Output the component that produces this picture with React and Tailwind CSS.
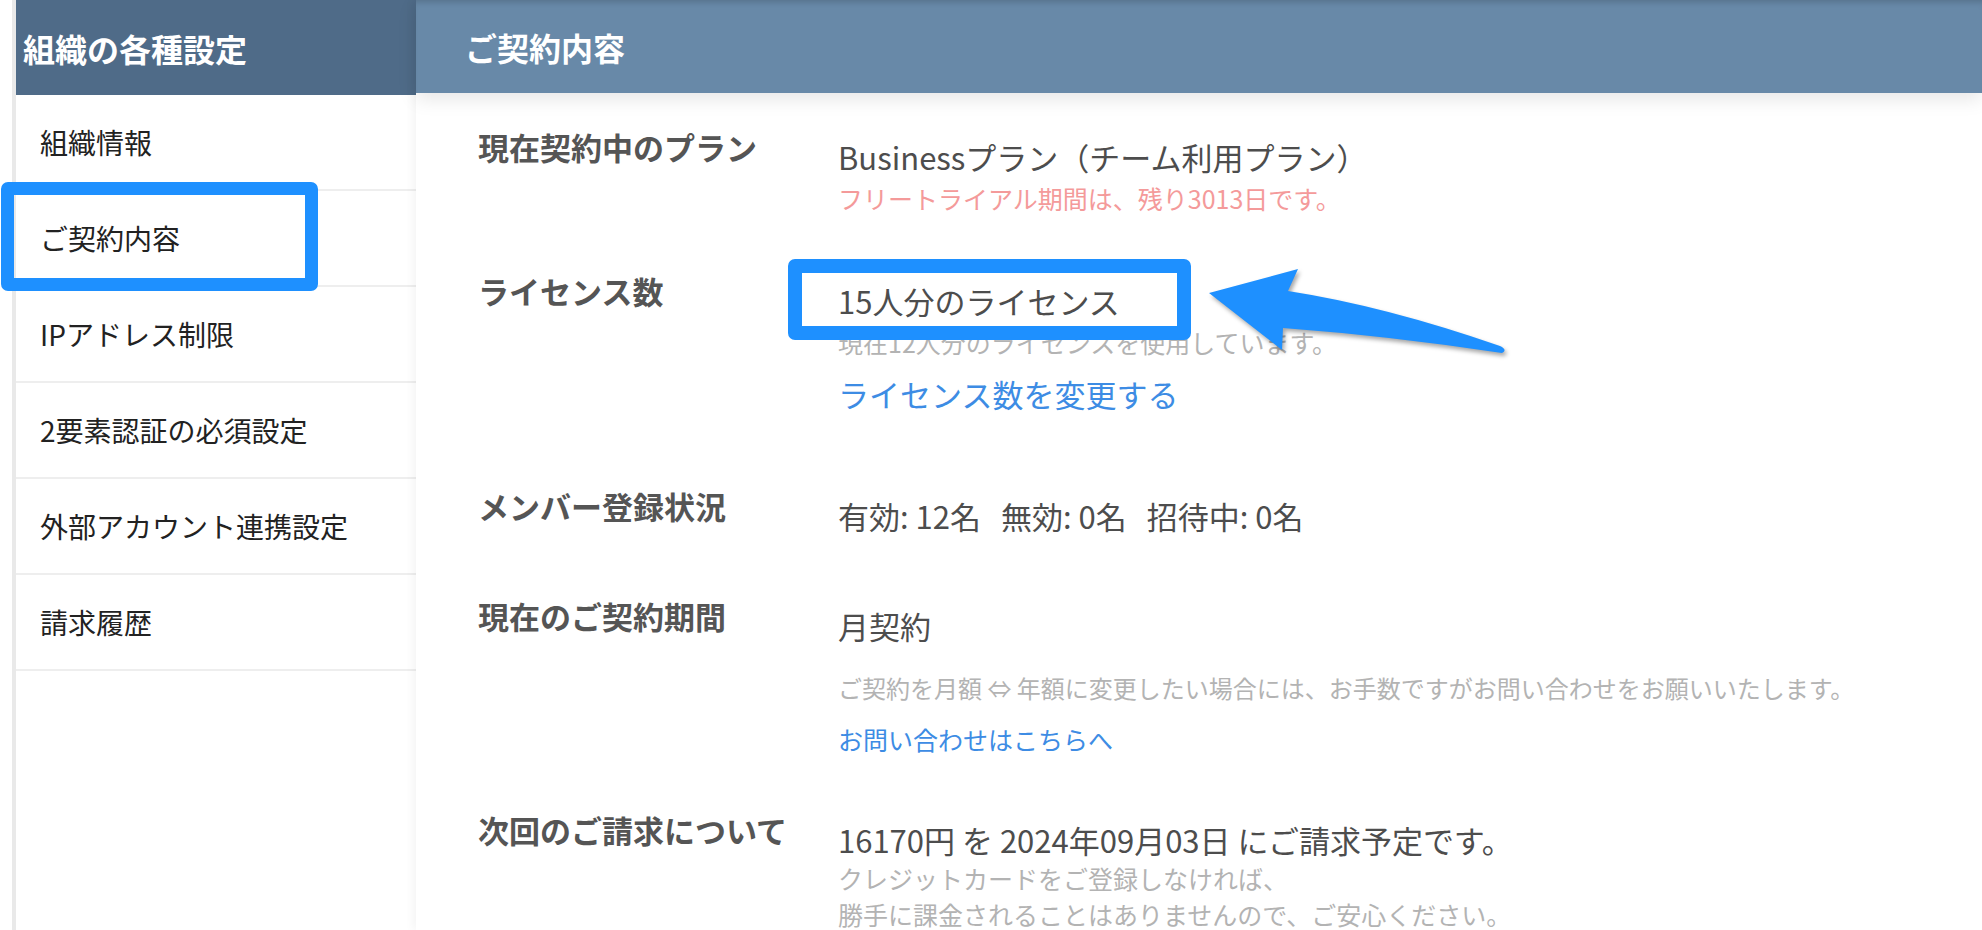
import React from 'react'

const menu = ['組織情報', 'ご契約内容', 'IPアドレス制限', '2要素認証の必須設定', '外部アカウント連携設定', '請求履歴']

const Row = ({ label, className, children }) => {
  return (
    <div className={'flex ' + className}>
      <div className='-mt-[5px] w-[360px] shrink-0 text-[31px] font-bold leading-[30px] text-[#555]'>{label}</div>
      <div className='flex flex-col'>{children}</div>
    </div>
  )
}

const App = () => {
  return (
    <div className="relative flex h-[930px] w-full overflow-hidden bg-white font-['Noto_Sans_CJK_JP','Noto_Sans',sans-serif]">
      {/* sidebar */}
      <div className='w-[416px] shrink-0 pl-3'>
        <div className='h-full border-l-4 border-[#e9e9e9]'>
          <div className='flex h-[95px] items-center bg-[#4f6b88] pl-[7px] text-[32px] font-bold text-white'>
            組織の各種設定
          </div>
          {menu.map((m) => (
            <div key={m} className='flex h-[96px] items-center border-b-2 border-[#eeeeee] pl-6 text-[28px] text-[#222]'>
              {m}
            </div>
          ))}
        </div>
      </div>

      {/* main */}
      <div className='flex-1 shadow-[-4px_0_8px_rgba(0,0,0,0.04)]'>
        <div className='flex h-[93px] items-center bg-[#6889a8] pl-[49px] text-[32px] font-bold text-white shadow-[inset_0_6px_6px_-4px_rgba(0,0,0,0.18),0_6px_18px_rgba(0,0,0,0.1)]'>
          ご契約内容
        </div>
        <div className='flex flex-col pl-[62px] text-[31px] text-[#4d4d4d]'>
          <Row label='現在契約中のプラン' className='mt-[44px]'>
            <div className='leading-[40px]'>Businessプラン（チーム利用プラン）</div>
            <div className='text-[25px] leading-[42px] text-[#f49a9a]'>フリートライアル期間は、残り3013日です。</div>
          </Row>
          <Row label='ライセンス数' className='mt-[62px]'>
            <div className='leading-[40px]'>15人分のライセンス</div>
            <div className='text-[25px] leading-[42px] text-[#b3b3b3]'>現在12人分のライセンスを使用しています。</div>
            <div className='mt-[11px] leading-[40px] text-[#3d8ce4]'>ライセンス数を変更する</div>
          </Row>
          <Row label='メンバー登録状況' className='mt-[82px]'>
            <div className='flex gap-[20px] leading-[40px]'>
              <span>有効: 12名</span>
              <span>無効: 0名</span>
              <span>招待中: 0名</span>
            </div>
          </Row>
          <Row label='現在のご契約期間' className='mt-[70px]'>
            <div className='leading-[40px]'>月契約</div>
            <div className='mt-[24px] text-[24px] leading-[36px] text-[#b3b3b3]'>
              ご契約を月額 ⇔ 年額に変更したい場合には、お手数ですがお問い合わせをお願いいたします。
            </div>
            <div className='mt-[15px] text-[25px] leading-[36px] text-[#3d8ce4]'>お問い合わせはこちらへ</div>
          </Row>
          <Row label='次回のご請求について' className='mt-[63px]'>
            <div className='leading-[40px]'>16170円 を 2024年09月03日 にご請求予定です。</div>
            <div className='text-[25px] leading-[36px] text-[#b3b3b3]'>クレジットカードをご登録しなければ、</div>
            <div className='text-[25px] leading-[36px] text-[#b3b3b3]'>勝手に課金されることはありませんので、ご安心ください。</div>
          </Row>
        </div>
      </div>

      {/* annotations */}
      <div className='absolute left-[1px] top-[182px] h-[109px] w-[317px] rounded-[7px] border-[13px] border-[#1e90ff]' />
      <div className='absolute left-[788px] top-[259px] h-[81px] w-[403px] rounded-[7px] border-[14px] border-[#1e90ff]' />
      <svg className='absolute left-[1200px] top-[260px] drop-shadow-[2px_3px_2px_rgba(0,0,0,0.35)]' width='320' height='100' viewBox='0 0 320 100'>
        <path d='M9 33 L98 9 L88 31 Q185 46 300 86 Q308 90 302 93 Q190 76 83 68 L82 90 Z' fill='#1e90ff' />
      </svg>
    </div>
  )
}

export default App
